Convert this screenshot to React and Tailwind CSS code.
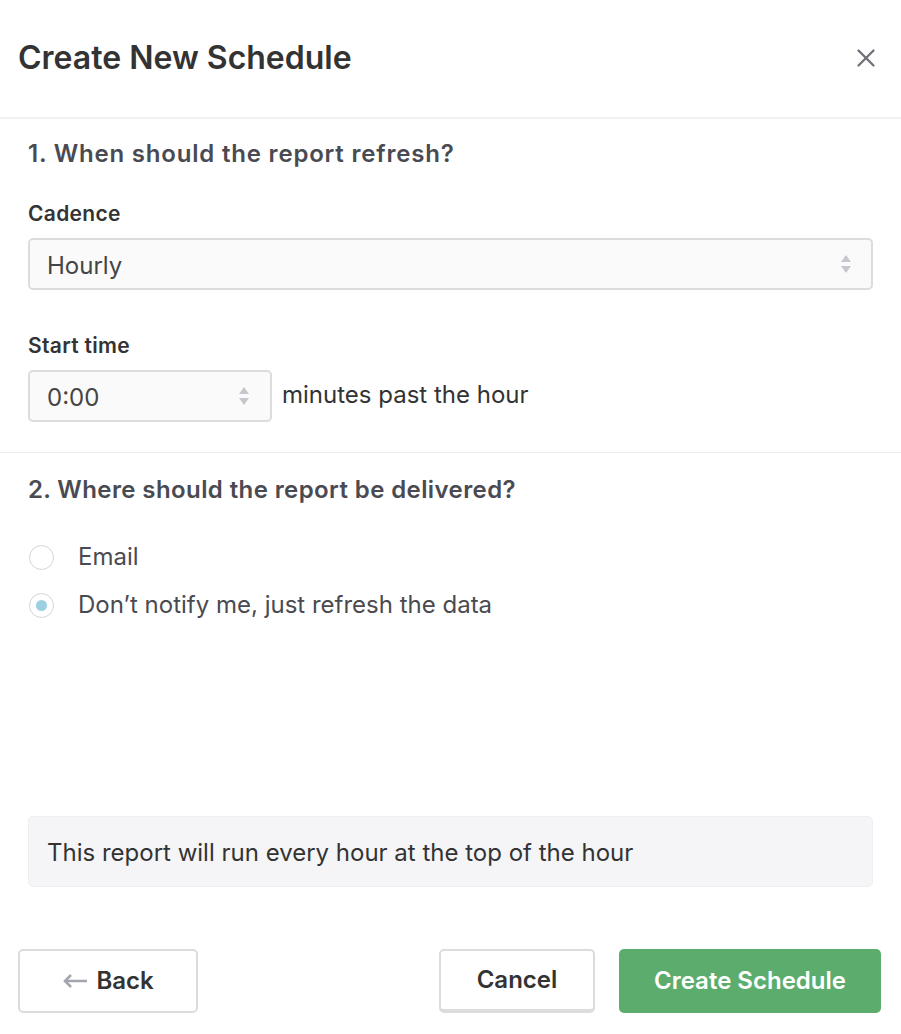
import { X } from "lucide-react";

const Spinner = () => (
  <svg width="14" height="22" viewBox="0 0 14 22" className="shrink-0">
    <path d="M7 2 L12 9 L2 9 Z" fill="#c4c7cc" />
    <path d="M7 20 L12 13 L2 13 Z" fill="#c4c7cc" />
  </svg>
);

const Radio = ({ checked, label }) => (
  <label className="flex items-center gap-[24px] h-[24px]">
    <span className="w-[25px] h-[25px] rounded-full border border-[#d5d5d8] bg-white flex items-center justify-center shrink-0">
      {checked && <span className="w-[11px] h-[11px] rounded-full bg-[#9ccfdf]" />}
    </span>
    <span className="text-[24px] text-[#4a4a50]">{label}</span>
  </label>
);

const App = () => {
  return (
    <div
      className="w-[901px] h-[1034px] bg-white flex flex-col text-[#333]"
      style={{ fontFamily: "Inter, 'Noto Sans', sans-serif" }}
    >
      <div className="h-[119px] shrink-0 flex items-center justify-between pl-[18px] pr-[20px] border-b-2 border-[#f1f1f2]">
        <h1 className="text-[32px] font-semibold text-[#333] -mt-[2px]">
          Create New Schedule
        </h1>
        <X size={30} strokeWidth={1.8} className="text-[#6f7178] -mt-[2px]" />
      </div>

      <div className="px-[28px] pt-[20px] pb-[30px] border-b border-[#ececee]">
        <h2 className="text-[24px] font-semibold text-[#4a4a52] leading-[30px] tracking-[0.8px]">
          1. When should the report refresh?
        </h2>
        <div className="mt-[33px] text-[21px] font-semibold text-[#333] leading-[24px] tracking-[0.3px]">Cadence</div>
        <div className="mt-[12px] h-[52px] rounded-[5px] border-2 border-[#dcdcde] bg-[#fafafa] flex items-center justify-between pl-[17px] pr-[18px]">
          <span className="text-[24px] text-[#444] mt-[3px]">Hourly</span>
          <Spinner />
        </div>
        <div className="mt-[44px] text-[21px] font-semibold text-[#333] leading-[24px] tracking-[0.3px]">Start time</div>
        <div className="mt-[12px] flex items-center gap-[10px]">
          <div className="w-[244px] h-[52px] rounded-[5px] border-2 border-[#dcdcde] bg-[#fafafa] flex items-center justify-between pl-[17px] pr-[19px]">
            <span className="text-[24px] text-[#444] mt-[3px]">0:00</span>
            <Spinner />
          </div>
          <span className="text-[24px] text-[#333] -mt-[2px]">minutes past the hour</span>
        </div>
      </div>

      <div className="px-[28px] pt-[22px] flex-1 flex flex-col">
        <h2 className="text-[24px] font-semibold text-[#4a4a52] leading-[30px] tracking-[0.4px]">
          2. Where should the report be delivered?
        </h2>
        <div className="mt-[40px] flex flex-col gap-[24px] pl-[1px]">
          <Radio label="Email" />
          <Radio label="Don’t notify me, just refresh the data" checked />
        </div>
        <div className="flex-1" />
        <div className="h-[71px] rounded-[5px] bg-[#f5f5f7] border border-[#efeff1] flex items-center pl-[18px] mb-[62px]">
          <span className="text-[24px] text-[#333] mt-[2px]">This report will run every hour at the top of the hour</span>
        </div>
      </div>

      <div className="flex items-center justify-between pl-[18px] pr-[20px] pb-[21px]">
        <button className="w-[180px] h-[64px] rounded-[5px] border-2 border-[#dcdcde] bg-white flex items-center justify-center gap-[8px] text-[24px] font-semibold text-[#333]">
          <svg width="26" height="16" viewBox="0 0 26 16">
            <path d="M3 8 H25" stroke="#a3a4ad" strokeWidth="2.5" />
            <path d="M9 2 L3 8 L9 14" stroke="#a3a4ad" strokeWidth="2.5" fill="none" />
          </svg>
          Back
        </button>
        <div className="flex items-center gap-[24px]">
          <button className="w-[156px] h-[64px] rounded-[5px] border-2 border-[#dcdcde] border-b-[4px] bg-white text-[24px] font-semibold text-[#333]">
            Cancel
          </button>
          <button className="w-[262px] h-[64px] rounded-[5px] bg-[#5cad6d] text-[24px] font-semibold text-white">
            Create Schedule
          </button>
        </div>
      </div>
    </div>
  );
};

export default App;
